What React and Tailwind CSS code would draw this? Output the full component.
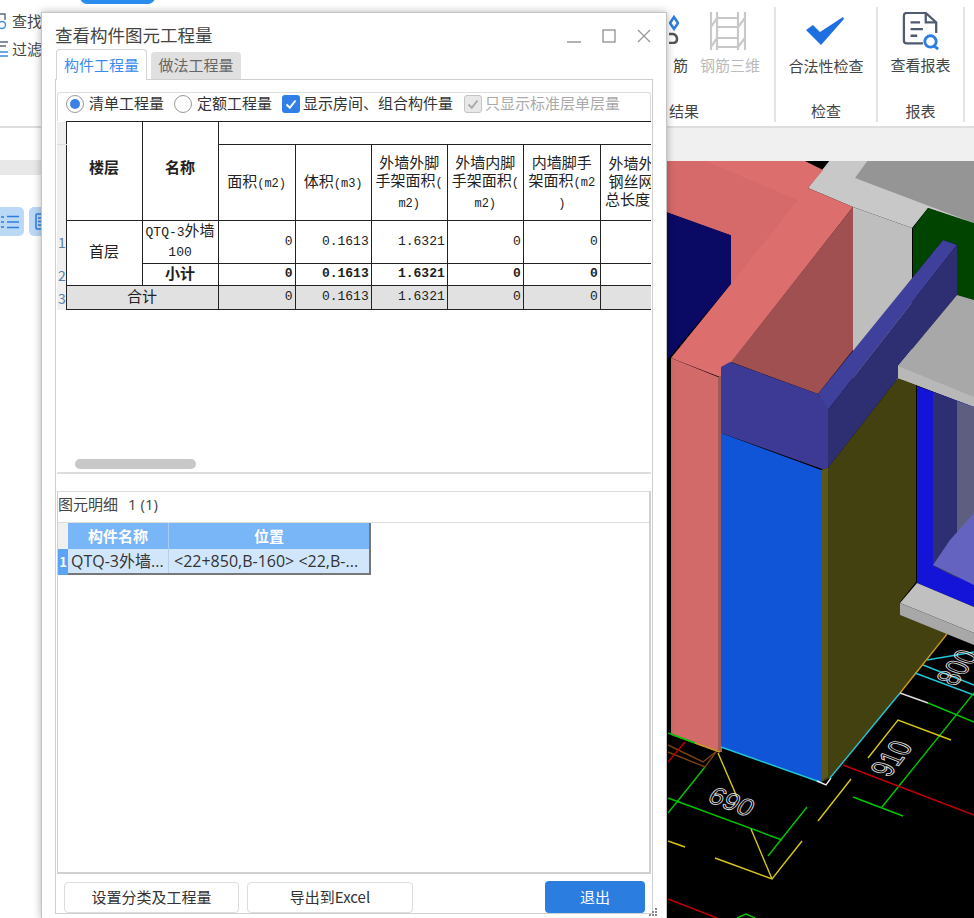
import React from "react";

const cjk = "font-['Noto_Sans_CJK_SC','Noto_Sans',sans-serif]";
const mono = "font-['Liberation_Mono','Noto_Sans_CJK_SC',monospace]";

const Latin = ({ children }) => <span className={`text-[12px] ${mono}`}>{children}</span>;

const HEAD = [
    <>面积<Latin>(m2)</Latin></>,
    <>体积<Latin>(m3)</Latin></>,
    <>外墙外脚<br />手架面积<Latin>(</Latin><br /><Latin>m2)</Latin></>,
    <>外墙内脚<br />手架面积<Latin>(</Latin><br /><Latin>m2)</Latin></>,
    <>内墙脚手<br />架面积<Latin>(m2</Latin><br /><Latin>)</Latin></>,
    <>外墙外脚<br />钢丝网片<br />总长度<Latin>(m)</Latin></>,
];

const VALUES = ["0", "0.1613", "1.6321", "0", "0", ""];

const cell = "border border-[#222] p-0";
const rowHead = "bg-[#f0f0f0] text-[#5a7fa8] text-[14px] leading-none text-left pl-[1px] p-0";

const NumCells = ({ bold }) =>
    VALUES.map((v, i) => (
        <td key={i} className={`${cell} text-right pr-[2px] pb-[2px] text-[13px] leading-none ${mono} ${bold ? "font-bold" : ""}`}>{v}</td>
    ));

function QuantityTable() {
    return (
        <table className="table-fixed border-collapse w-[620px] text-[#222]">
            <colgroup>
                <col className="w-[9px]" />
                <col className="w-[76px]" />
                <col className="w-[76px]" />
                <col className="w-[77px]" />
                <col className="w-[76px]" />
                <col className="w-[76px]" />
                <col className="w-[76px]" />
                <col className="w-[77px]" />
                <col className="w-[76px]" />
            </colgroup>
            <tbody>
                <tr className="h-[23px]">
                    <td className="bg-[#f0f0f0] p-0 border-b border-[#ddd]"></td>
                    <td rowSpan={2} className={`${cell} text-center font-bold text-[15px] pb-[8px]`}>楼层</td>
                    <td rowSpan={2} className={`${cell} text-center font-bold text-[15px] pb-[8px]`}>名称</td>
                    <td colSpan={6} className={cell}></td>
                </tr>
                <tr className="h-[76px]">
                    <td className="bg-[#f0f0f0] p-0"></td>
                    {HEAD.map((h, i) => (
                        <td key={i} className={`${cell} text-center text-[15px] leading-[18px] whitespace-nowrap overflow-hidden`}>{h}</td>
                    ))}
                </tr>
                <tr className="h-[41px]">
                    <td className={rowHead}>1</td>
                    <td rowSpan={2} className={`${cell} text-center text-[15px] pb-[4px]`}>首层</td>
                    <td className={`${cell} text-center text-[15px] leading-[17px] pb-[2px]`}><span className={`text-[13px] ${mono}`}>QTQ-3</span>外墙<br /><span className={`text-[13px] ${mono}`}>100</span></td>
                    <NumCells />
                </tr>
                <tr className="h-[22px]">
                    <td className={rowHead}>2</td>
                    <td className={`${cell} text-center text-[15px] font-bold leading-none pb-[4px]`}>小计</td>
                    <NumCells bold />
                </tr>
                <tr className="h-[24px] bg-[#e1e1e1]">
                    <td className={`${rowHead} !bg-[#f0f0f0]`}>3</td>
                    <td colSpan={2} className={`${cell} text-center text-[15px] leading-none pb-[4px]`}>合计</td>
                    <NumCells />
                </tr>
            </tbody>
        </table>
    );
}

const Radio = ({ checked }) => (
    <span className="w-[18px] h-[18px] rounded-full border border-[#999] bg-white flex items-center justify-center shrink-0">
        {checked && <span className="w-[10px] h-[10px] rounded-full bg-[#3a83e6]" />}
    </span>
);

const Check = ({ disabled }) => (
    <span className={`w-[18px] h-[18px] rounded-[3px] flex items-center justify-center shrink-0 ${disabled ? "bg-[#e8e8e8] border border-[#c4c4c4]" : "bg-[#2f7fe6]"}`}>
        <svg width="14" height="14" viewBox="0 0 14 14" fill="none" stroke={disabled ? "#aaa" : "#fff"} strokeWidth="2">
            <path d="M2.5 7.5 L5.8 10.8 L11.5 3.5" />
        </svg>
    </span>
);

function Dialog() {
    return (
        <div className={`absolute left-[41px] top-[12px] w-[626px] h-[906px] bg-white border-t border-l border-r border-[#c4c4c4] shadow-[0_0_8px_rgba(0,0,0,0.3)] flex flex-col ${cjk}`}>
            <div className="h-[35px] shrink-0 flex items-center pl-[13px] pt-[9px] pr-[15px] justify-between">
                <span className="text-[17.5px] text-[#444] whitespace-nowrap">查看构件图元工程量</span>
                <div className="flex items-center gap-[21px] text-[#888] pt-[2px]">
                    <svg width="14" height="14" viewBox="0 0 14 14" stroke="#999" strokeWidth="1.5"><path d="M0 13 H14" /></svg>
                    <svg width="14" height="14" viewBox="0 0 14 14" fill="none" stroke="#888" strokeWidth="1.2"><rect x="1" y="1" width="12" height="12" /></svg>
                    <svg width="14" height="14" viewBox="0 0 14 14" fill="none" stroke="#999" strokeWidth="1.3"><path d="M1 1 L13 13 M13 1 L1 13" /></svg>
                </div>
            </div>

            <div className="flex items-end h-[31px] shrink-0 pl-[14px] text-[15px] relative z-10">
                <div className="w-[91px] h-[31px] bg-white border border-b-0 border-[#d4d4d4] rounded-t-[4px] text-[#3b8cf0] flex items-center justify-center -mb-px">构件工程量</div>
                <div className="ml-[4px] w-[90px] h-[27px] bg-[#e0e0e0] rounded-t-[4px] text-[#666] flex items-center justify-center">做法工程量</div>
            </div>

            <div className="ml-[13px] w-[598px] h-[835px] shrink-0 border border-[#cfcfcf] pt-[12px] px-[1px] flex flex-col">
                <div className="h-[29px] shrink-0 border border-b-0 border-[#ddd] rounded-t-[3px] flex items-center pl-[8px] pb-[7px] text-[15px] text-[#333] whitespace-nowrap">
                    <Radio checked />
                    <span className="ml-[5px]">清单工程量</span>
                    <span className="ml-[10px]"><Radio /></span>
                    <span className="ml-[5px]">定额工程量</span>
                    <span className="ml-[10px]"><Check /></span>
                    <span className="ml-[3px]">显示房间、组合构件量</span>
                    <span className="ml-[11px]"><Check disabled /></span>
                    <span className="ml-[3px] text-[#aaa]">只显示标准层单层量</span>
                </div>
                <div className="h-[353px] w-[594px] shrink-0 border-b-2 border-[#ddd] overflow-hidden relative">
                    <QuantityTable />
                    <div className="absolute left-[18px] bottom-[3px] w-[121px] h-[10px] rounded-full bg-[#c8c8c8]" />
                </div>

                <div className="mt-[17px] w-[594px] h-[383px] shrink-0 border-2 border-l border-[#d0d0d0] border-t border-t-[#ddd]">
                    <div className="h-[30px] flex items-center pb-[6px] text-[15px] text-[#444] whitespace-nowrap">
                        图元明细<span className="ml-[10px] text-[15px] font-['Open_Sans',sans-serif]">1 (1)</span>
                    </div>
                    <div className="border-t border-[#ddd] h-[53px] flex">
                        <div className="w-[10px] flex flex-col">
                            <div className="h-[27px] bg-[#f0f0f0]" />
                            <div className="h-[26px] bg-[#5ba3f5] text-white text-[13px] font-bold leading-[25px] text-center">1</div>
                        </div>
                        <div className="w-[303px] border-r-2 border-b-2 border-[#777] flex flex-col">
                            <div className="h-[26px] flex bg-[#78b6f8] text-white text-[15px] font-bold text-center leading-[26px]">
                                <div className="w-[101px] border-r border-[#a5cdf7]">构件名称</div>
                                <div className="flex-1">位置</div>
                            </div>
                            <div className="flex-1 flex bg-[#d2e6fb] text-[16px] text-[#333] leading-[24px] font-['Open_Sans','Noto_Sans_CJK_SC',sans-serif] whitespace-nowrap">
                                <div className="w-[101px] border-r border-[#b9cfe6] pl-[3px] overflow-hidden">QTQ-3外墙...</div>
                                <div className="flex-1 pl-[5px] overflow-hidden">&lt;22+850,B-160&gt; &lt;22,B-...</div>
                            </div>
                        </div>
                    </div>
                </div>

                <div className="flex-1 flex items-end pl-[7px] text-[15px] text-[#333]">
                    <button className="w-[175px] h-[31px] border border-[#ddd] rounded-[4px] bg-white">设置分类及工程量</button>
                    <button className="ml-[8px] w-[166px] h-[31px] border border-[#ddd] rounded-[4px] bg-white">导出到Excel</button>
                    <button className="ml-[132px] w-[100px] h-[32px] rounded-[4px] bg-[#2b7de0] text-white">退出</button>
                </div>
            </div>
            <svg className="absolute right-[8px] bottom-[1px]" width="10" height="10" viewBox="0 0 10 10" fill="#888">
                <rect x="7" y="1" width="2" height="2" /><rect x="4" y="4" width="2" height="2" /><rect x="7" y="4" width="2" height="2" />
                <rect x="1" y="7" width="2" height="2" /><rect x="4" y="7" width="2" height="2" /><rect x="7" y="7" width="2" height="2" />
            </svg>
        </div>
    );
}

const Poly = ({ c, p }) => <polygon fill={c} points={p} />;
const L = ({ c, p }) => <polyline fill="none" stroke={c} strokeWidth="1.4" points={p} />;

function CadView() {
    const green = "#00c800", yellow = "#d8c814", cyan = "#22c8d8", red = "#c00000", brown = "#7a4210";
    const cadText = "font-['Liberation_Sans',sans-serif]";
    return (
        <svg className="block" width="307" height="757" viewBox="667 161 307 757">
            <rect x="667" y="161" width="307" height="757" fill="#000" />
            <Poly c="#c8c8c8" p="830,160 808,188 853,207 912,228 928,208 974,224 974,160" />
            <Poly c="#959595" p="868,160 855,178 974,223 974,160" />
            <Poly c="#bebebe" p="853,207 912,228 912,380 853,380" />
            <Poly c="#004400" p="928,208 974,223 974,300 957,295 957,245 943,240 913,277 913,228" />
            <Poly c="#0a0a64" p="667,212 731,235 731,284 667,360" />
            <Poly c="#dd6e6e" p="667,160 803,160 823,170 808,188 853,207 720,377 671,358 731,284 731,235 667,212" />
            <Poly c="#d66a6a" p="703,160 798,200 731,284 731,235 667,212 667,160" />
            <Poly c="#a05050" p="853,207 853,350 818,394 731,362" />
            <Poly c="#d26a6a" p="671,358 718,377 718,752 671,735" />
            <Poly c="#a05a5a" p="718,377 722,375 722,752 718,752" />
            <Poly c="#1055d8" p="721,433 821,470 821,782 721,747" />
            <Poly c="#3c3a94" p="721,367 730,362 818,394 828,408 828,468 825,470 721,433" />
            <Poly c="#3f3f9c" p="818,394 943,240 957,245 828,410" />
            <Poly c="#2e2e72" p="828,410 957,245 957,295 898,366 898,378 828,468" />
            <Poly c="#43410f" p="821,470 828,468 898,378 916,385 916,582 900,602 900,615 947,633 900,693 830,778 821,782" />
            <Poly c="#59571a" p="821,470 828,468 828,776 821,782" />
            <Poly c="#a8a8a8" p="957,295 974,300 974,407 898,378 898,366" />
            <Poly c="#b8b8b8" p="898,366 974,397 974,407 898,378" />
            <Poly c="#1414d8" p="917,386 974,407 974,607 917,583" />
            <Poly c="#2e2e72" p="933,392 957,401 957,578 933,566" />
            <Poly c="#5e5e80" p="957,401 974,407 974,520 957,535" />
            <Poly c="#6464c0" p="933,565 950,540 974,513 974,585" />
            <Poly c="#c0c0c0" p="917,583 900,603 974,633 974,607" />
            <Poly c="#a8a8a8" p="900,603 900,615 974,645 974,633" />
            <L c={cyan} p="721,747 820,782" />
            <L c="#eee" p="817,781 826,785 831,778" />
            <L c={cyan} p="830,778 900,693" />
            <L c="#c89a20" p="900,693 947,634" />
            <L c="#ddd" p="900,693 928,703" />
            <L c={green} p="928,703 974,722" />
            <L c={cyan} p="923,665 974,685" />
            <L c={cyan} p="915,673 974,695" />
            <L c={cyan} p="927,660 974,652" />
            <L c={green} p="974,693 882,807" />
            <L c={green} p="853,797 903,816" />
            <L c={yellow} p="868,758 898,720 951,740" />
            <L c={red} p="843,765 974,815" />
            <L c={yellow} p="851,779 818,821" />
            <L c={green} p="668,798 782,840" />
            <L c={green} p="807,807 768,856" />
            <L c={green} p="705,767 668,813" />
            <L c={yellow} p="718,753 737,797" />
            <L c={yellow} p="751,829 772,879" />
            <L c={yellow} p="802,841 772,879 715,858" />
            <L c={yellow} p="668,841 685,847" />
            <L c={red} p="668,899 717,918" />
            <L c={green} p="737,918 746,914 755,918" />
            <L c={brown} p="668,745 703,762 718,750" />
            <L c={brown} p="668,752 705,767 716,752" />
            <L c={red} p="685,742 668,762" />
            <L c={green} p="668,733 695,743" />
            <L c="#c89a20" p="695,743 720,752" />
            <text transform="matrix(0.934 0.358 -0.5 0.8 706 801)" fontSize="27" fill="none" stroke="#ddd" strokeWidth="0.9" className={cadText}>690</text>
            <text transform="matrix(0.616 -0.788 1.21 0.465 889 778)" fontSize="24" fill="none" stroke="#ddd" strokeWidth="0.8" className={cadText}>910</text>
            <text transform="matrix(0.616 -0.788 1.21 0.465 955 687)" fontSize="24" fill="none" stroke="#ddd" strokeWidth="0.8" className={cadText}>800</text>
        </svg>
    );
}

const Ribbon = () => (
    <div className={`h-[128px] border-b-2 border-[#dedede] flex relative text-[15px] text-[#444] ${cjk}`}>
        <div className="absolute left-[80px] -top-[10px] w-[75px] h-[14px] rounded-full bg-[#2b8cf0]" />
        <div className="w-[42px] pt-[10px] pl-[12px] flex flex-col gap-[7px] whitespace-nowrap shrink-0 relative">
            <span className="leading-[21px]">查找</span>
            <span className="leading-[21px]">过滤</span>
            <svg className="absolute left-0 top-[12px]" width="10" height="50" viewBox="0 0 10 50" fill="none" stroke="#5b6a85" strokeWidth="1.4">
                <path d="M-2 2 H5 V8" /><circle cx="2" cy="13" r="3.5" stroke="#3a8be0" />
                <path d="M0 30 H8 M0 34 H6" /><path d="M0 40 H8 M0 44 H8" stroke="#3a8be0" />
            </svg>
        </div>
        <div className="flex-1" />
        <div className="w-[107px] border-r-2 border-[#e4e4e4] my-[7px] h-[115px] flex flex-col shrink-0 relative">
            <svg className="absolute left-[0px] top-[7px]" width="10" height="30" viewBox="0 0 10 30" fill="none">
                <path d="M1 9 L5 3 L9 9 L5 15 Z" fill="none" stroke="#2b7de0" strokeWidth="2.5" />
                <path d="M0 20 H4 Q8 21 8 25 Q8 29 4 29 H0" stroke="#555" strokeWidth="2.5" />
            </svg>
            <div className="flex pt-[47px] h-[80px] whitespace-nowrap">
                <span className="w-[19px] text-right">筋</span>
                <span className="ml-[12px] text-[#bbb] relative">
                    钢筋三维
                    <svg className="absolute left-[9px] -top-[42px]" width="38" height="38" viewBox="0 0 38 38" fill="none" stroke="#c8c8c8" strokeWidth="2.2">
                        <path d="M2 0 V38 M8 0 V38 M29 0 V38 M36 0 V38" />
                        <path d="M8 6 H29 M8 15 H29 M8 26 H29 M8 35 H29" />
                        <path d="M8 6 L2 15 M36 6 L29 15 M8 26 L2 35 M36 26 L29 35" />
                    </svg>
                </span>
            </div>
            <span className="pt-[14px]">结果</span>
        </div>
        <div className="w-[102px] border-r-2 border-[#e4e4e4] my-[7px] h-[115px] flex flex-col items-center shrink-0">
            <svg className="mt-[10px] -ml-[3px]" width="38" height="28" viewBox="0 0 38 28" fill="#1f6fe0">
                <path d="M0 13 L7 8 L14 15 L37 0 L38 2 L15 28 Z" />
            </svg>
            <span className="mt-[10px] leading-[22px]">合法性检查</span>
            <span className="mt-[23px] leading-[22px]">检查</span>
        </div>
        <div className="w-[87px] border-r-2 border-[#e4e4e4] my-[7px] h-[115px] flex flex-col items-center shrink-0">
            <svg className="mt-[5px]" width="40" height="40" viewBox="0 0 40 40" fill="none" stroke="#4f5b70" strokeWidth="2.4">
                <path d="M22 33 H5 Q2 33 2 30 V4 Q2 1 5 1 H25 L36 11 V22" />
                <path d="M25 1 V11 H36" />
                <path d="M9 11 H19 M9 18 H22 M9 25 H16" />
                <circle cx="30" cy="31" r="6" stroke="#2b7de0" strokeWidth="3" />
                <path d="M34 36 L38 39" stroke="#2b7de0" strokeWidth="3" />
            </svg>
            <span className="mt-[4px] leading-[22px] whitespace-nowrap">查看报表</span>
            <span className="mt-[24px] leading-[22px]">报表</span>
        </div>
        <div className="w-[9px] shrink-0" />
    </div>
);

const LeftPanel = () => (
    <div className="w-[667px] shrink-0 flex flex-col bg-white">
        <div className="h-[32px]" />
        <div className="h-[15px] bg-[#e8e8e8]" />
        <div className="mt-[32px] flex gap-[5px]">
            <div className="w-[24px] h-[29px] rounded-r-[5px] bg-[#bcd8f7] flex items-center justify-end pr-[5px]">
                <svg width="18" height="14" viewBox="0 0 18 14" fill="none" stroke="#2b7de0" strokeWidth="1.5"><path d="M0 2 H3 M0 7 H3 M0 12 H3 M6 1.5 H18 M6 7 H18 M6 12.5 H18" /></svg>
            </div>
            <div className="w-[24px] h-[29px] rounded-[5px] bg-[#bcd8f7] pl-[6px] pt-[6px]">
                <svg width="12" height="17" viewBox="0 0 12 17" fill="none" stroke="#2b7de0" strokeWidth="1.5"><rect x="1" y="1" width="10" height="15" rx="1" /><path d="M3 5 H9 M3 8.5 H9 M3 12 H9" /></svg>
            </div>
        </div>
    </div>
);

export default function App() {
    return (
        <div className="relative w-[974px] h-[918px] overflow-hidden bg-white">
            <Ribbon />
            <div className="flex h-[790px]">
                <LeftPanel />
                <div className="flex-1 flex flex-col">
                    <div className="h-[33px] shrink-0 bg-[#f0f0f0]" />
                    <CadView />
                </div>
            </div>
            <Dialog />
        </div>
    );
}
